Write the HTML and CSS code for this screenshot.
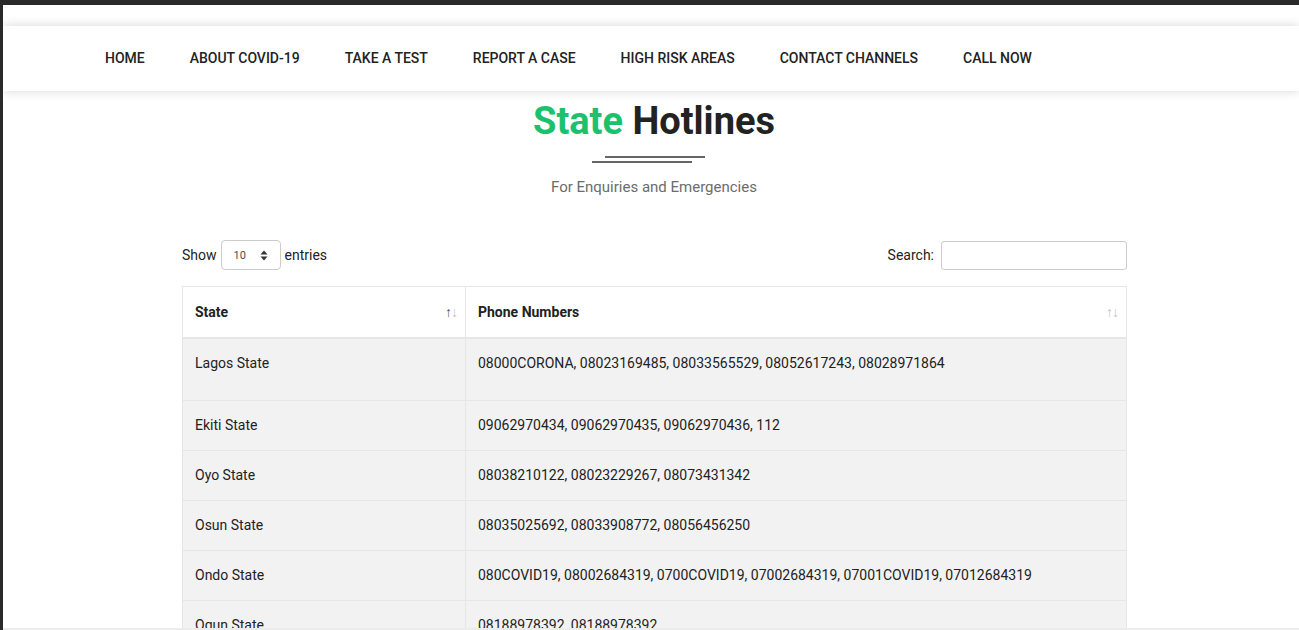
FILE: index.html
```html
<!DOCTYPE html>
<html>
<head>
<meta charset="utf-8">
<link rel="stylesheet" href="styles.css">
</head>
<body>
<div class="frame">
  <div class="page">
    <nav class="nav">
      <a>HOME</a>
      <a>ABOUT COVID-19</a>
      <a>TAKE A TEST</a>
      <a>REPORT A CASE</a>
      <a>HIGH RISK AREAS</a>
      <a>CONTACT CHANNELS</a>
      <a>CALL NOW</a>
    </nav>
    <section class="hero">
      <h1 class="title"><span class="green">State</span> Hotlines</h1>
      <div class="rule">
        <span class="rule-a"></span>
        <span class="rule-b"></span>
      </div>
      <p class="sub">For Enquiries and Emergencies</p>
    </section>
    <section class="dt">
      <div class="controls">
        <label class="len">Show
          <span class="select"><span>10</span>
            <svg width="8" height="11" viewBox="0 0 8 11"><path d="M4 0.5 L7.5 4.5 H0.5 Z M4 10.5 L7.5 6.5 H0.5 Z" fill="#333"/></svg>
          </span>
          entries</label>
        <label class="search">Search: <span class="input"></span></label>
      </div>
      <table class="table">
        <thead>
          <tr>
            <th class="c1">State <span class="sort"><b>↑</b>↓</span></th>
            <th>Phone Numbers <span class="sort">↑↓</span></th>
          </tr>
        </thead>
        <tbody>
          <tr class="tall"><td>Lagos State</td><td>08000CORONA, 08023169485, 08033565529, 08052617243, 08028971864</td></tr>
          <tr><td>Ekiti State</td><td>09062970434, 09062970435, 09062970436, 112</td></tr>
          <tr><td>Oyo State</td><td>08038210122, 08023229267, 08073431342</td></tr>
          <tr><td>Osun State</td><td>08035025692, 08033908772, 08056456250</td></tr>
          <tr><td>Ondo State</td><td>080COVID19, 08002684319, 0700COVID19, 07002684319, 07001COVID19, 07012684319</td></tr>
          <tr><td>Ogun State</td><td>08188978392, 08188978392</td></tr>
        </tbody>
      </table>
    </section>
    <div class="hbar"></div>
  </div>
</div>
</body>
</html>
```

FILE: styles.css
```css
* { box-sizing: border-box; }
html, body { margin: 0; padding: 0; }
body {
  font-family: Roboto, "Liberation Sans", Arial, sans-serif;
  color: #222;
  background: #2a2a2a;
  overflow: hidden;
}
.frame {
  padding: 5px 0 0 3px;
  height: 630px;
}
.page {
  background: #fff;
  height: 625px;
  overflow: hidden;
  position: relative;
}
.nav {
  margin-top: 21px;
  height: 65px;
  display: flex;
  align-items: center;
  gap: 45px;
  padding-left: 102px;
  padding-bottom: 2px;
  background: #fff;
  box-shadow: 0 0 10px rgba(0, 0, 0, 0.16);
  position: relative;
  z-index: 1;
}
.nav a {
  font-size: 14px;
  font-weight: 500;
  color: #222;
  letter-spacing: -0.01px;
}
.hero {
  text-align: center;
  padding-top: 7px;
  padding-left: 6px;
}
.title {
  margin: 0;
  font-size: 38px;
  font-weight: 700;
  line-height: 46px;
  color: #222;
}
.green { color: #1cc16e; }
.rule {
  display: flex;
  flex-direction: column;
  width: 125px;
  margin: 12px auto 0;
  padding-right: 12px;
  gap: 3px;
}
.rule span {
  display: block;
  width: 100px;
  height: 2px;
  background: #666;
}
.rule-a { margin-left: 13px; }
.rule-b { margin-left: 0; }
.sub {
  margin: 15px 0 0;
  font-size: 15px;
  color: #6c6c6c;
}
.dt {
  width: 945px;
  margin: 44px 0 0 179px;
}
.controls {
  display: flex;
  justify-content: space-between;
  align-items: center;
  font-size: 14px;
  color: #222;
  height: 30px;
}
.len, .search {
  display: flex;
  align-items: center;
  gap: 4px;
}
.select {
  display: inline-flex;
  align-items: center;
  justify-content: space-between;
  width: 60px;
  height: 30px;
  border: 1px solid #ccc;
  border-radius: 4px;
  padding: 0 12px 0 12px;
  font-size: 11px;
  color: #495057;
}
.input {
  display: inline-block;
  width: 186px;
  height: 29px;
  border: 1px solid #ccc;
  border-radius: 3px;
  margin-left: 3px;
}
.table {
  width: 100%;
  border-collapse: collapse;
  margin-top: 16px;
  font-size: 14px;
}
.table th, .table td {
  border: 1px solid #e6e6e6;
  text-align: left;
  vertical-align: top;
  padding: 13px 12px;
  line-height: 22px;
}
.table th {
  font-weight: 700;
  height: 51px;
  vertical-align: middle;
  border-bottom: 2px solid #e6e6e6;
  position: relative;
  background: #fff;
  padding-top: 14px;
}
.table th.c1 { width: 283px; }
.sort {
  position: absolute;
  right: 8px;
  top: 50%;
  transform: translateY(-50%);
  font-size: 14px;
  font-weight: 400;
  color: #c4c4c4;
  letter-spacing: -1px;
}
.sort b { font-weight: 400; color: #555; }
.table td {
  background: #f2f2f2;
  color: #222;
  height: 50px;
}
.table tr.tall td { height: 63px; }
.hbar {
  position: absolute;
  left: 0;
  right: 0;
  bottom: 0;
  height: 2px;
  background: #ececec;
}
```
